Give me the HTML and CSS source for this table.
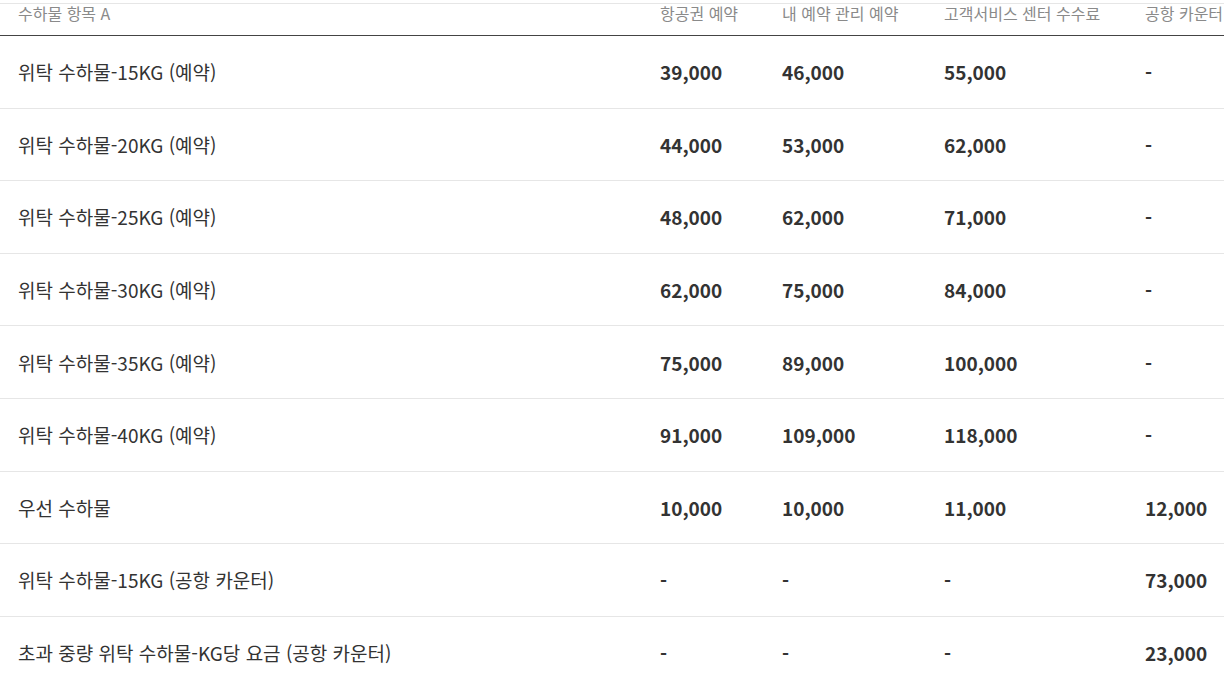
FILE: index.html
```html
<!DOCTYPE html>
<html lang="ko">
<head>
<meta charset="utf-8">
<title>수하물 요금</title>
<link rel="stylesheet" href="styles.css">
</head>
<body>
<div class="wrap">
  <table class="fees">
    <colgroup>
      <col class="c-name">
      <col class="c-a">
      <col class="c-b">
      <col class="c-c">
      <col class="c-d">
    </colgroup>
    <thead>
      <tr>
        <th>수하물 항목 A</th>
        <th>항공권 예약</th>
        <th>내 예약 관리 예약</th>
        <th>고객서비스 센터 수수료</th>
        <th>공항 카운터</th>
      </tr>
    </thead>
    <tbody>
      <tr><td>위탁 수하물-15KG (예약)</td><td class="num">39,000</td><td class="num">46,000</td><td class="num">55,000</td><td class="num">-</td></tr>
      <tr><td>위탁 수하물-20KG (예약)</td><td class="num">44,000</td><td class="num">53,000</td><td class="num">62,000</td><td class="num">-</td></tr>
      <tr><td>위탁 수하물-25KG (예약)</td><td class="num">48,000</td><td class="num">62,000</td><td class="num">71,000</td><td class="num">-</td></tr>
      <tr><td>위탁 수하물-30KG (예약)</td><td class="num">62,000</td><td class="num">75,000</td><td class="num">84,000</td><td class="num">-</td></tr>
      <tr><td>위탁 수하물-35KG (예약)</td><td class="num">75,000</td><td class="num">89,000</td><td class="num">100,000</td><td class="num">-</td></tr>
      <tr><td>위탁 수하물-40KG (예약)</td><td class="num">91,000</td><td class="num">109,000</td><td class="num">118,000</td><td class="num">-</td></tr>
      <tr><td>우선 수하물</td><td class="num">10,000</td><td class="num">10,000</td><td class="num">11,000</td><td class="num">12,000</td></tr>
      <tr><td>위탁 수하물-15KG (공항 카운터)</td><td class="num">-</td><td class="num">-</td><td class="num">-</td><td class="num">73,000</td></tr>
      <tr><td>초과 중량 위탁 수하물-KG당 요금 (공항 카운터)</td><td class="num">-</td><td class="num">-</td><td class="num">-</td><td class="num">23,000</td></tr>
    </tbody>
  </table>
</div>
</body>
</html>
```
FILE: styles.css
```css
html, body {
  margin: 0;
  padding: 0;
  background: #ffffff;
}
body {
  font-family: "Noto Sans CJK KR", "Noto Sans", sans-serif;
  color: #333333;
  overflow: hidden;
}
.wrap {
  width: 100%;
  overflow: hidden;
  padding-top: 3px;
}
.fees {
  table-layout: fixed;
  border-collapse: collapse;
  width: 1250px;
  border-top: 1px solid #e6e6e6;
}
.c-name { width: 642px; }
.c-a { width: 122px; }
.c-b { width: 162px; }
.c-c { width: 201px; }
.c-d { width: 123px; }

.fees th {
  text-align: left;
  font-weight: 400;
  font-size: 16px;
  line-height: 19px;
  color: #8a8a8a;
  padding: 0 0 12px 18px;
  white-space: nowrap;
  border-bottom: 1px solid #444444;
}
.fees td {
  font-size: 19px;
  line-height: 27px;
  color: #333333;
  height: 72.6px;
  padding: 0 0 0 18px;
  box-sizing: border-box;
  white-space: nowrap;
  vertical-align: middle;
  border-bottom: 1px solid #e6e6e6;
}
.fees td.num {
  font-weight: 700;
}
.fees tbody tr:last-child td {
  border-bottom: none;
}
```
